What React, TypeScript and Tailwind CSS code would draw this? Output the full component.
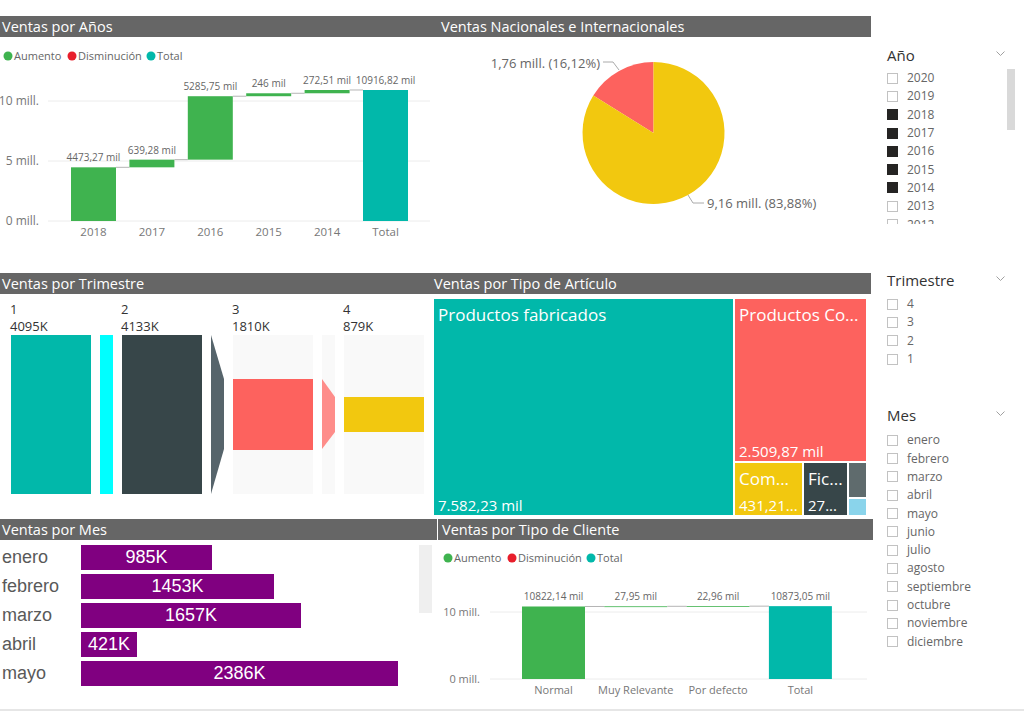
import React from 'react';

const GREEN = '#3fb34f';
const RED = '#e81e2b';
const TEAL = '#01b8aa';

const TitleBar = ({ title, className = '' }: { title: string; className?: string }) => (
  <div className={`bg-[#666666] text-white text-[14.5px] leading-[21px] pl-[2px] whitespace-nowrap ${className}`}>
    {title}
  </div>
);

const Legend = ({ x, y }: { x: number; y: number }) => (
  <g fontSize="11" fill="#666">
    <circle cx={x + 4} cy={y} r="4.5" fill={GREEN} />
    <text x={x + 10} y={y + 4}>Aumento</text>
    <circle cx={x + 68} cy={y} r="4.5" fill={RED} />
    <text x={x + 74} y={y + 4}>Disminución</text>
    <circle cx={x + 147} cy={y} r="4.5" fill={TEAL} />
    <text x={x + 153} y={y + 4}>Total</text>
  </g>
);

// waterfall by year
const years = [
  { label: '2018', value: 4473.27, text: '4473,27 mil' },
  { label: '2017', value: 639.28, text: '639,28 mil' },
  { label: '2016', value: 5285.75, text: '5285,75 mil' },
  { label: '2015', value: 246, text: '246 mil' },
  { label: '2014', value: 272.51, text: '272,51 mil' },
];

const YearWaterfall = () => {
  const base = 184;
  const k = 0.012;
  let cum = 0;
  const bars = years.map((d, i) => {
    const start = cum;
    cum += d.value;
    return { ...d, x: 71 + i * 58.4, top: base - cum * k, bottom: base - start * k, total: false };
  });
  bars.push({ label: 'Total', value: cum, text: '10916,82 mil', x: 71 + 5 * 58.4, top: base - cum * k, bottom: base, total: true });
  return (
    <svg width="430" height="228" className="block">
      <Legend x={4} y={19} />
      {[64, 124, 184].map((y, i) => (
        <g key={y}>
          <line x1="48" x2="430" y1={y} y2={y} stroke="#ececec" />
          <text x="39" y={y + 4} fontSize="12" fill="#777" textAnchor="end">
            {['10 mill.', '5 mill.', '0 mill.'][i]}
          </text>
        </g>
      ))}
      {bars.map((b, i) => (
        <g key={b.label}>
          <rect x={b.x} y={b.top} width="45" height={b.bottom - b.top} fill={b.total ? TEAL : GREEN} />
          {i < bars.length - 1 && (
            <line x1={b.x + 45} x2={bars[i + 1].x} y1={b.top} y2={b.top} stroke="#b5b5b5" />
          )}
          <text x={b.x + 22.5} y={b.top - 6} fontSize="10" fill="#666" textAnchor="middle">{b.text}</text>
          <text x={b.x + 22.5} y={199} fontSize="11.5" fill="#777" textAnchor="middle">{b.label}</text>
        </g>
      ))}
    </svg>
  );
};

const PieChart = () => (
  <svg width="441" height="228" className="block">
    <path d="M223.5 96 L163.3 58.4 A71 71 0 0 1 223.5 25 Z" fill="#fd625e" />
    <path d="M223.5 96 L223.5 25 A71 71 0 1 1 163.3 58.4 Z" fill="#f2c80f" />
    <polyline points="173,25 183,25 189,33" fill="none" stroke="#aaa" />
    <text x="170" y="31" fontSize="13" fill="#666" textAnchor="end">1,76 mill. (16,12%)</text>
    <polyline points="258,158 263,166 274,166" fill="none" stroke="#aaa" />
    <text x="277" y="171" fontSize="13" fill="#666">9,16 mill. (83,88%)</text>
  </svg>
);

const QuarterChart = () => (
  <svg width="430" height="222" className="block">
    {[
      { x: 10, n: '1', v: '4095K' },
      { x: 121, n: '2', v: '4133K' },
      { x: 232, n: '3', v: '1810K' },
      { x: 343, n: '4', v: '879K' },
    ].map((l) => (
      <g key={l.n} fontSize="13" fill="#333">
        <text x={l.x} y="20">{l.n}</text>
        <text x={l.x} y="37">{l.v}</text>
      </g>
    ))}
    <rect x="11" y="41" width="80" height="159" fill="#01b8aa" />
    <rect x="100" y="41" width="13" height="159" fill="#00ffff" />
    <rect x="122" y="41" width="80" height="159" fill="#374649" />
    <polygon points="211,41 224,85 224,155 211,200" fill="#56646b" />
    <rect x="233" y="41" width="80" height="159" fill="#f9f9f9" />
    <rect x="233" y="85" width="80" height="71" fill="#fd625e" />
    <rect x="322" y="41" width="13" height="159" fill="#f9f9f9" />
    <polygon points="322,85 335,103 335,138 322,155" fill="#fe8d8a" />
    <rect x="344" y="41" width="80" height="159" fill="#f9f9f9" />
    <rect x="344" y="103" width="80" height="35" fill="#f2c80f" />
  </svg>
);

const Tile = ({ bg, top, bottom, className }: { bg: string; top?: string; bottom?: string; className: string }) => (
  <div className={`${bg} ${className} flex flex-col justify-between text-white pl-[4px] overflow-hidden whitespace-nowrap`}>
    <div className="text-[17px] leading-[22px] pt-[5px]">{top}</div>
    <div className="text-[15px] leading-[18px] pb-[1px]">{bottom}</div>
  </div>
);

const Treemap = () => (
  <div className="flex gap-[2px] w-[432px] h-[216px] ml-[4px] mt-[5px]">
    <Tile bg="bg-[#01b8aa]" className="w-[299px] h-full" top="Productos fabricados" bottom="7.582,23 mil" />
    <div className="flex flex-col gap-[2px] w-[131px]">
      <Tile bg="bg-[#fd625e]" className="h-[162px]" top="Productos Co..." bottom="2.509,87 mil" />
      <div className="flex gap-[2px] h-[52px]">
        <Tile bg="bg-[#f2c80f]" className="w-[67px]" top="Com..." bottom="431,21..." />
        <Tile bg="bg-[#374649]" className="w-[43px]" top="Fic..." bottom="27..." />
        <div className="flex flex-col gap-[2px] w-[17px]">
          <div className="h-[34px] bg-[#5f6b6d]" />
          <div className="flex-1 bg-[#8ad4eb]" />
        </div>
      </div>
    </div>
  </div>
);

const months = [
  { m: 'enero', v: 985 },
  { m: 'febrero', v: 1453 },
  { m: 'marzo', v: 1657 },
  { m: 'abril', v: 421 },
  { m: 'mayo', v: 2386 },
];

const MonthBars = () => (
  <div className="flex font-['Liberation_Sans',Arial,sans-serif]">
    <div className="flex-1 flex flex-col gap-[4px] pt-[5px]">
      {months.map((r) => (
        <div key={r.m} className="flex items-center h-[25px]">
          <div className="w-[81px] pl-[2px] text-[18px] text-[#595959]">{r.m}</div>
          <div
            className="h-full bg-[#800080] text-white text-[18px] leading-[25px] text-center"
            style={{ width: `${r.v * 0.1329}px` }}
          >
            {r.v}K
          </div>
        </div>
      ))}
    </div>
    <div className="w-[13px] h-[68px] bg-[#efefef] mt-[5px] mr-[5px]" />
  </div>
);

const clients = [
  { label: 'Normal', value: 10822.14, text: '10822,14 mil' },
  { label: 'Muy Relevante', value: 27.95, text: '27,95 mil' },
  { label: 'Por defecto', value: 22.96, text: '22,96 mil' },
];

const ClientWaterfall = () => {
  const base = 139;
  const k = 0.0067;
  let cum = 0;
  const bars = clients.map((d, i) => {
    const start = cum;
    cum += d.value;
    return { ...d, x: 84 + i * 82.3, top: base - cum * k, bottom: base - start * k, total: false };
  });
  bars.push({ label: 'Total', value: cum, text: '10873,05 mil', x: 84 + 3 * 82.3, top: base - cum * k, bottom: base, total: true });
  return (
    <svg width="435" height="169" className="block">
      <Legend x={6} y={18} />
      {[72, 139].map((y, i) => (
        <g key={y}>
          <line x1="52" x2="429" y1={y} y2={y} stroke="#ececec" />
          <text x="42" y={y + 4} fontSize="11" fill="#777" textAnchor="end">{['10 mill.', '0 mill.'][i]}</text>
        </g>
      ))}
      {bars.map((b, i) => (
        <g key={b.label}>
          <rect x={b.x} y={b.top} width="63" height={Math.max(b.bottom - b.top, 0.8)} fill={b.total ? TEAL : GREEN} />
          {i < bars.length - 1 && (
            <line x1={b.x + 63} x2={bars[i + 1].x} y1={b.top} y2={b.top} stroke="#b5b5b5" />
          )}
          <text x={b.x + 31.5} y={60} fontSize="10" fill="#666" textAnchor="middle">{b.text}</text>
          <text x={b.x + 31.5} y={154} fontSize="11" fill="#777" textAnchor="middle">{b.label}</text>
        </g>
      ))}
    </svg>
  );
};

const Chevron = () => (
  <svg width="9" height="6" viewBox="0 0 9 6" className="mr-[2px] mb-[3px]">
    <polyline points="0.5,0.5 4.5,4.5 8.5,0.5" fill="none" stroke="#a0a0a0" strokeWidth="1" />
  </svg>
);

const SlicerHeader = ({ title }: { title: string }) => (
  <div className="flex justify-between items-center w-[120px] h-[22px]">
    <span className="text-[15px] text-[#333]">{title}</span>
    <Chevron />
  </div>
);

const SlicerItem = ({ label, checked = false }: { label: string; checked?: boolean }) => (
  <div className="flex items-center h-[18.3px]">
    <div className={`w-[11px] h-[11px] border ${checked ? 'bg-[#252423] border-[#252423]' : 'border-[#c2c2c2]'}`} />
    <span className="ml-[9px] text-[12px] text-[#666] leading-none">{label}</span>
  </div>
);

const yearsList = ['2020', '2019', '2018', '2017', '2016', '2015', '2014', '2013', '2012'];
const monthsList = ['enero', 'febrero', 'marzo', 'abril', 'mayo', 'junio', 'julio', 'agosto', 'septiembre', 'octubre', 'noviembre', 'diciembre'];

export default function App() {
  return (
    <div className="w-[1024px] h-[711px] bg-white flex overflow-hidden border-b-2 border-[#e6e6e6] font-['Open_Sans','Noto_Sans',sans-serif]">
      <main className="w-[873px] flex flex-col">
        {/* top row */}
        <section className="flex mt-[16px] h-[249px]">
          <div className="w-[430px]">
            <TitleBar title="Ventas por Años" />
            <YearWaterfall />
          </div>
          <div className="w-[441px]">
            <TitleBar title="Ventas Nacionales e Internacionales" className="pl-[11px]" />
            <PieChart />
          </div>
        </section>

        {/* middle row */}
        <section className="flex mt-[8px] h-[242px]">
          <div className="w-[430px]">
            <TitleBar title="Ventas por Trimestre" className="leading-[20px]" />
            <QuarterChart />
          </div>
          <div className="w-[441px]">
            <TitleBar title="Ventas por Tipo de Artículo" className="leading-[20px] pl-[4px]" />
            <Treemap />
          </div>
        </section>

        {/* bottom row */}
        <section className="flex mt-[4px] flex-1">
          <div className="w-[437px]">
            <TitleBar title="Ventas por Mes" />
            <MonthBars />
          </div>
          <div className="w-[435px] ml-[1px]">
            <TitleBar title="Ventas por Tipo de Cliente" className="pl-[4px]" />
            <ClientWaterfall />
          </div>
        </section>
      </main>

      <aside className="flex-1 pl-[14px] pt-[44px]">
        <SlicerHeader title="Año" />
        <div className="flex h-[155px] overflow-hidden mt-[3px]">
          <div className="w-[120px]">
            {yearsList.map((y) => (
              <SlicerItem key={y} label={y} checked={['2018', '2017', '2016', '2015', '2014'].includes(y)} />
            ))}
          </div>
          <div className="w-[8px] h-[63px] bg-[#d9d9d9] -mt-[2px]" />
        </div>

        <div className="mt-[45px]">
          <SlicerHeader title="Trimestre" />
          <div className="mt-[4px]">
            {['4', '3', '2', '1'].map((q) => (
              <SlicerItem key={q} label={q} />
            ))}
          </div>
        </div>

        <div className="mt-[36px]">
          <SlicerHeader title="Mes" />
          <div className="mt-[5px]">
            {monthsList.map((m) => (
              <SlicerItem key={m} label={m} />
            ))}
          </div>
        </div>
      </aside>
    </div>
  );
}
